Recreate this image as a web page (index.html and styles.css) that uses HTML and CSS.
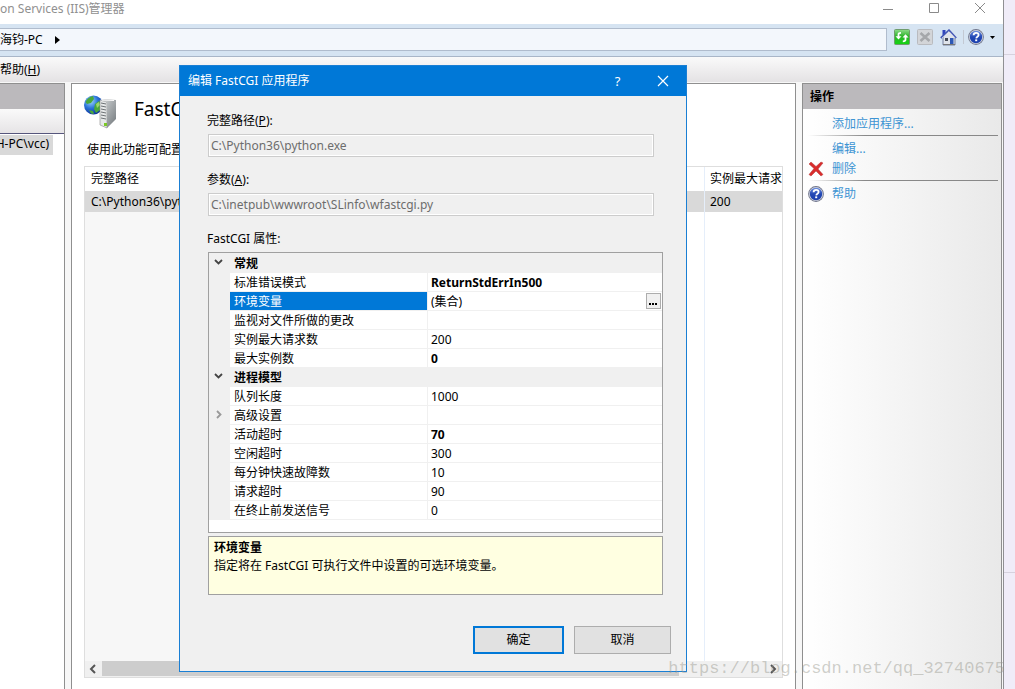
FILE: index.html
```html
<!DOCTYPE html>
<html lang="zh-CN">
<head>
<meta charset="utf-8">
<title>Internet Information Services (IIS)管理器</title>
<link rel="stylesheet" href="styles.css">
</head>
<body>
<svg class="defs" width="0" height="0" aria-hidden="true">
  <defs>
    <linearGradient id="blueball" x1="0" y1="0" x2="0" y2="1"><stop offset="0" stop-color="#6d8fe0"/><stop offset=".5" stop-color="#2348b4"/><stop offset="1" stop-color="#1a3fae"/></linearGradient>
    <linearGradient id="greenbtn" x1="0" y1="0" x2="0" y2="1"><stop offset="0" stop-color="#8fdc8a"/><stop offset=".45" stop-color="#2db52b"/><stop offset="1" stop-color="#12d512"/></linearGradient>
    <radialGradient id="globe" cx=".35" cy=".3" r=".75"><stop offset="0" stop-color="#9fd8ff"/><stop offset=".5" stop-color="#2a73d8"/><stop offset="1" stop-color="#0b2f94"/></radialGradient>
    <linearGradient id="tower" x1="0" y1="0" x2="1" y2="1"><stop offset="0" stop-color="#d9dcdd"/><stop offset="1" stop-color="#70767a"/></linearGradient>
    <symbol id="help" viewBox="0 0 16 16">
      <circle cx="8" cy="8" r="7.9" fill="#70758a"/><circle cx="8" cy="8" r="7" fill="#d0d4e0"/><circle cx="8" cy="8" r="6.200" fill="url(#blueball)"/>
      <path d="M5.600 6.300C5.700 4.600 6.800 3.900 8.100 3.900c1.500 0 2.500.8 2.500 2 0 1.700-2.200 1.800-2.400 3.500" fill="none" stroke="#fff" stroke-width="1.800"/><rect x="7.200" y="10.400" width="2" height="1.800" fill="#fff"/>
    </symbol>
  </defs>
</svg>
<div class="screen">
  <main class="app">
    <header class="titlebar">
      <span>on Services (IIS)管理器</span>
      <div class="winbtns">
        <button aria-label="最小化"><svg width="12" height="12"><path d="M1 7.500h10" stroke="#8a8a8a"/></svg></button>
        <button aria-label="最大化"><svg width="12" height="12"><path d="M1.500 1.500h9v9h-9z" fill="none" stroke="#8a8a8a"/></svg></button>
        <button aria-label="关闭"><svg width="12" height="12"><path d="M1 1l10 10M11 1L1 11" stroke="#8a8a8a"/></svg></button>
      </div>
    </header>
    <div class="address">
      <div class="crumbs"><span>海钧-PC</span><svg width="5" height="8"><path d="M0 0l5 4-5 4z"/></svg></div>
      <div class="tools">
        <button aria-label="刷新"><svg width="16" height="16" viewBox="0 0 16 16"><rect x=".5" y=".5" width="15" height="15" rx="1" fill="url(#greenbtn)" stroke="#6f9c6c"/><path d="M1.500 7.200h6L4.500 10.600z" fill="#fff"/><path d="M8.500 8.600h6L11.500 5.200z" fill="#fff"/><path d="M4.500 8V5.500c0-1 .8-1.700 2.500-1.700M11.500 8v2.500c0 1-.8 1.800-2.700 1.800" fill="none" stroke="#fff" stroke-width="1.800"/></svg></button>
        <button aria-label="停止" disabled><svg width="16" height="16" viewBox="0 0 16 16"><rect x=".5" y=".5" width="15" height="15" rx="1" fill="#d3d5d8" stroke="#b9bbbf"/><path d="M3.500 4l9 8M12.500 4l-9 8" stroke="#a5a7aa" stroke-width="2.600"/></svg></button>
        <button aria-label="主页"><svg width="17" height="17" viewBox="0 0 17 17"><path d="M3 8v8h12V8L9 2z" fill="#dfe3ea" stroke="#7480a0"/><path d="M2.500 1h3v5h-3z" fill="#3146bd"/><path d="M.8 9L9 1.200 16.200 9" fill="none" stroke="#4256b5" stroke-width="1.800"/><path d="M2 9l7-6.500L15.200 9" fill="none" stroke="#fff" stroke-width=".6"/><path d="M5 9h3v3H5z" fill="#444b57"/><path d="M10 9h3.500v7H10z" fill="#2d58b6"/><path d="M3 15.500h12" stroke="#777"/></svg></button>
        <i class="sep"></i>
        <button aria-label="帮助" class="helpbtn"><svg width="16" height="16"><use href="#help"/></svg><svg width="5" height="3"><path d="M0 0h5L2.500 3z"/></svg></button>
      </div>
    </div>
    <nav class="menubar"><span>帮助(<u>H</u>)</span></nav>
    <div class="panes">
      <aside class="tree">
        <div class="panehead"></div>
        <div class="treetools"></div>
        <div class="treeitem"><span>H-PC\vcc)</span></div>
      </aside>
      <section class="center">
        <div class="feature">
          <svg width="34" height="34" viewBox="0 0 34 34"><circle cx="9.500" cy="10" r="9.500" fill="url(#globe)"/><path d="M1.500 7C3 3.500 6 1.500 9 1l1 3-3 4-4 1zM11 9l4-3 3 3-2 6-4 3-2-4zM5 15l4 1 1 3-3-.5z" fill="#49a83b"/><path d="M12 9l3-2 1 3-3 3z" fill="#bce985" opacity=".7"/><path d="M16 5l7 2v26l-7-3z" fill="#e6e8e8" stroke="#888" stroke-width=".6"/><path d="M16 5l4-1 12 1v19l-9 9V7z" fill="url(#tower)"/><path d="M17 8l5 1M17 11l5 1M17 14l5 1M17 17l5 1M17 20l5 1M17 23l5 1" stroke="#6d7275"/><path d="M18 5l12 .5" stroke="#fafafa"/><path d="M20 28h3v3h-3z" fill="#7bc825"/></svg>
          <h1>FastCGI</h1>
        </div>
        <p class="intro">使用此功能可配置 FastCGI 应用程序。</p>
        <div class="list">
          <table>
            <colgroup><col class="c-path"><col class="c-arg"><col class="c-max"></colgroup>
            <tbody>
              <tr class="head"><th>完整路径</th><th></th><th>实例最大请求</th></tr>
              <tr class="item"><td>C:\Python36\python.exe</td><td></td><td>200</td></tr>
              <tr class="fill"><td></td><td></td><td></td></tr>
            </tbody>
          </table>
          <div class="hscroll">
            <svg width="17" height="16"><path d="M10 4L6 8l4 4" fill="none" stroke="#555" stroke-width="2"/></svg>
            <i class="thumb"></i>
            <svg width="18" height="16"><path d="M7 4l4 4-4 4" fill="none" stroke="#555" stroke-width="2"/></svg>
          </div>
        </div>
      </section>
      <aside class="actions">
        <h2>操作</h2>
        <ul>
          <li><a href="#">添加应用程序...</a></li>
          <li class="rule"></li>
          <li><a href="#">编辑...</a></li>
          <li><svg width="16" height="16" viewBox="0 0 16 16"><path d="M1 3l2-2 5 4.500L13 1l2 1-5 6 5 5.500-2 1.500-5-5-5 5-2-1.500 5-6z" fill="#d92b2b" stroke="#b33a3a" stroke-width=".5"/></svg><a href="#">删除</a></li>
          <li class="rule"></li>
          <li><svg width="16" height="16"><use href="#help"/></svg><a href="#">帮助</a></li>
        </ul>
      </aside>
    </div>
  </main>
  <div class="behind"><i></i><i></i></div>
</div>

<form class="dialog" role="dialog" aria-labelledby="dlg-title">
  <header class="dlg-title">
    <h2 id="dlg-title">编辑 FastCGI 应用程序</h2>
    <button type="button" class="dlg-btn">?</button>
    <button type="button" class="dlg-btn" aria-label="关闭"><svg width="12" height="12"><path d="M1 1l10 10M11 1L1 11" stroke="#fff" stroke-width="1.200"/></svg></button>
  </header>
  <div class="dlg-body">
    <div class="field"><label for="path">完整路径(<u>P</u>):</label><input id="path" disabled value="C:\Python36\python.exe"></div>
    <div class="field"><label for="args">参数(<u>A</u>):</label><input id="args" disabled value="C:\inetpub\wwwroot\SLinfo\wfastcgi.py"></div>
    <div class="caption">FastCGI 属性:</div>
    <div class="grid">
      <table>
        <colgroup><col class="g-gut"><col class="g-name"><col></colgroup>
        <tbody>
          <tr class="cat"><td><svg width="9" height="6"><path d="M1 1l3.500 3.500L8 1" fill="none" stroke="#444" stroke-width="1.800"/></svg></td><th colspan="2">常规</th></tr>
          <tr><td></td><th>标准错误模式</th><td><b>ReturnStdErrIn500</b></td></tr>
          <tr class="sel"><td></td><th>环境变量</th><td><div class="editor"><span>(集合)</span><button type="button" aria-label="编辑集合"><svg width="9" height="9"><path d="M0 6h2v2H0zM3 6h2v2H3zM6 6h2v2H6z"/></svg></button></div></td></tr>
          <tr><td></td><th>监视对文件所做的更改</th><td></td></tr>
          <tr><td></td><th>实例最大请求数</th><td>200</td></tr>
          <tr><td></td><th>最大实例数</th><td><b>0</b></td></tr>
          <tr class="cat"><td><svg width="9" height="6"><path d="M1 1l3.500 3.500L8 1" fill="none" stroke="#444" stroke-width="1.800"/></svg></td><th colspan="2">进程模型</th></tr>
          <tr><td></td><th>队列长度</th><td>1000</td></tr>
          <tr><td><svg width="6" height="9"><path d="M1 1l3.500 3.500L1 8" fill="none" stroke="#999" stroke-width="1.800"/></svg></td><th>高级设置</th><td></td></tr>
          <tr><td></td><th>活动超时</th><td><b>70</b></td></tr>
          <tr><td></td><th>空闲超时</th><td>300</td></tr>
          <tr><td></td><th>每分钟快速故障数</th><td>10</td></tr>
          <tr><td></td><th>请求超时</th><td>90</td></tr>
          <tr><td></td><th>在终止前发送信号</th><td>0</td></tr>
        </tbody>
      </table>
    </div>
    <div class="hint"><b>环境变量</b><p>指定将在 FastCGI 可执行文件中设置的可选环境变量。</p></div>
    <footer><button type="button" class="ok">确定</button><button type="button" class="cancel">取消</button></footer>
  </div>
</form>
<div class="watermark">https://blog.csdn.net/qq_32740675</div>
</body>
</html>
```

FILE: styles.css
```css
* { box-sizing: border-box; }
body, h1, h2, p, ul { margin: 0; padding: 0; }
body, button, input {
  font: 12px/18px "Noto Sans", "Noto Sans CJK SC", sans-serif;
  color: #000;
}
body { overflow: hidden; }
button { padding: 0; border: 0; background: none; display: flex; align-items: center; justify-content: center; }
svg { display: block; flex: none; }
table { border-collapse: separate; border-spacing: 0; table-layout: fixed; width: 100%; }
.defs { position: absolute; }

.screen { display: flex; height: 100vh; overflow: hidden; }
.app { flex: 1; min-width: 0; display: flex; flex-direction: column; background: #f7f7f7; border-right: 1px solid #8f8f93; }
.behind { width: 11px; background: #f0ecf8; display: flex; flex-direction: column; padding-top: 54px; gap: 517px; }
.behind i { height: 1px; background: #d6d2de; flex: none; }

.titlebar { height: 24px; flex: none; background: #fff; color: #909090; display: flex; justify-content: space-between; }
.winbtns { display: flex; gap: 34px; padding-right: 17px; height: 16px; }

.address { height: 33px; flex: none; background: #d6e4f2; border-bottom: 1px solid #a9b6c8; display: flex; padding: 4px 8px 5px 0; }
.crumbs { flex: 1; background: #f3f7fc; border: 1px solid #b0bccd; border-left: 0; display: flex; align-items: center; gap: 12px; height: 23px; }
.tools { display: flex; align-items: center; gap: 7px; width: 108px; height: 18px; padding-left: 7px; }
.sep { width: 1px; height: 14px; background: #c3c9d3; margin: 0 -3px 0 -1px; }
.helpbtn { gap: 6px; }

.menubar { height: 26px; flex: none; background: linear-gradient(#fafafa, #e4e2e4); padding-top: 4px; border-bottom: 1px solid #f7f7f7; }

.panes { flex: 1; min-height: 0; display: flex; gap: 6px; padding-right: 1px; }
.tree { width: 65px; flex: none; background: #fff; border: solid #8f8f8f; border-width: 1px 1px 0 0; }
.panehead { height: 25px; background: #bbb9bc; }
.treetools { height: 25px; background: linear-gradient(#fafafa, #e6e4e6); border-bottom: 1px solid #56567c; }
.treeitem { width: 53px; height: 20px; margin-top: 1px; padding-right: 4px; background: #d9d9d9; display: flex; justify-content: flex-end; overflow: hidden; white-space: nowrap; }

.center { flex: 1; min-width: 0; background: #fff; border: 1px solid #8f8f8f; border-bottom: 0; padding: 11px 12px 11px; display: flex; flex-direction: column; }
.feature { display: flex; gap: 16px; height: 46px; }
h1 { font-size: 19px; line-height: 28px; font-weight: 400; }
.intro { padding-left: 3px; height: 25px; white-space: nowrap; }
.list { flex: 1; min-height: 0; border: 1px solid #dedede; display: flex; flex-direction: column; }
.list table { flex: 1; }
.c-path { width: 300px; }
.c-max { width: 78px; }
.list th, .list td { padding: 0 0 0 6px; text-align: left; font-weight: 400; white-space: nowrap; overflow: hidden; }
.list th + th, .list td + td { border-left: 1px solid #e5eefa; padding-left: 5px; }
.list .head { height: 24px; }
.list .item { height: 21px; background: #d9d9d9; }
.list .fill td:first-child { background: #f7f7f7; }
.hscroll { height: 16px; flex: none; display: flex; background: #f0f0f0; }
.thumb { flex: 1; margin-right: 85px; background: #cdcdcd; height: 15px; }

.actions { width: 200px; flex: none; border: 1px solid #8f8f8f; border-bottom: 0; background: linear-gradient(90deg, #fff, #e9e9e9); }
.actions h2 { height: 25px; padding: 3px 7px; background: #bbb9bc; font-size: 12px; line-height: 20px; font-weight: 700; }
.actions ul { list-style: none; padding: 5px 3px 0 5px; }
.actions li { display: flex; align-items: center; gap: 8px; height: 20px; }
.actions li > a:first-child { margin-left: 24px; }
.actions li.rule { height: 5px; align-items: flex-start; }
.actions li.rule::before { content: ""; flex: 1; height: 1px; margin-top: 1px; background: linear-gradient(90deg, transparent, #888 30%); }
.actions a { color: #3d94d3; text-decoration: none; }

.dialog { position: absolute; left: 179px; top: 65px; width: 508px; background: #f0f0f0; border: 1px solid #1a7fd4; }
.dlg-title { height: 30px; background: #0078d7; color: #fff; display: flex; padding-right: 1px; }
.dlg-title h2 { flex: 1; padding-left: 8px; font-size: 12px; line-height: 30px; font-weight: 400; }
.dlg-btn { width: 45px; color: #fff; font-size: 13px; }
.dlg-body { padding: 16px 15px 17px 27px; }
.field { height: 59px; width: 448px; }
.field label { display: block; height: 22px; }
.field input { display: block; width: 446px; height: 23px; margin-left: 1px; padding: 0 2px; border: 1px solid #ccc; background: #f0f0f0; box-shadow: inset 0 0 0 1px #fff; color: #6d6d6d; }
.caption { height: 22px; }
.grid, .hint { margin: 0 8px 0 1px; border: 1px solid #a0a0a0; }
.grid { background: #fff; border-top-color: #a0a0a0; padding-bottom: 12px; }
.grid table { border-top: 1px solid #f0f0f0; }
.g-gut { width: 21px; }
.g-name { width: 197px; }
.grid tr { height: 19px; }
.grid th, .grid td { height: 19px; padding: 1px 4px 0; font-weight: 400; line-height: 17px; text-align: left; border-bottom: 1px solid #f0f0f0; }
.grid td:first-child { background: #f0f0f0; padding: 0 7px 2px 5px; }
.grid td:first-child svg { margin: 0 auto; }
.grid td:last-child { border-left: 1px solid #f0f0f0; padding-left: 3px; }
.grid .cat th { background: #f0f0f0; font-weight: 700; }
.grid .sel th { background: #0078d7; color: #fff; }
.grid .sel td:last-child { padding: 0 1px 0 3px; }
.editor { display: flex; justify-content: space-between; align-items: center; height: 18px; }
.editor button { width: 15px; height: 16px; background: #f0f0f0; border: 1px solid #adadad; }
.hint { background: #ffffe1; height: 59px; margin-top: 3px; padding: 2px 5px; }
.hint b { display: block; }
footer { display: flex; justify-content: flex-end; gap: 10px; margin-top: 31px; }
footer button { height: 28px; background: #e1e1e1; }
.ok { width: 91px; border: 2px solid #0078d7; }
.cancel { width: 97px; border: 1px solid #adadad; }

.watermark { position: absolute; right: 10px; bottom: 8px; font: 17px/24px "Liberation Mono", monospace; color: rgba(150, 150, 140, .45); }
```
